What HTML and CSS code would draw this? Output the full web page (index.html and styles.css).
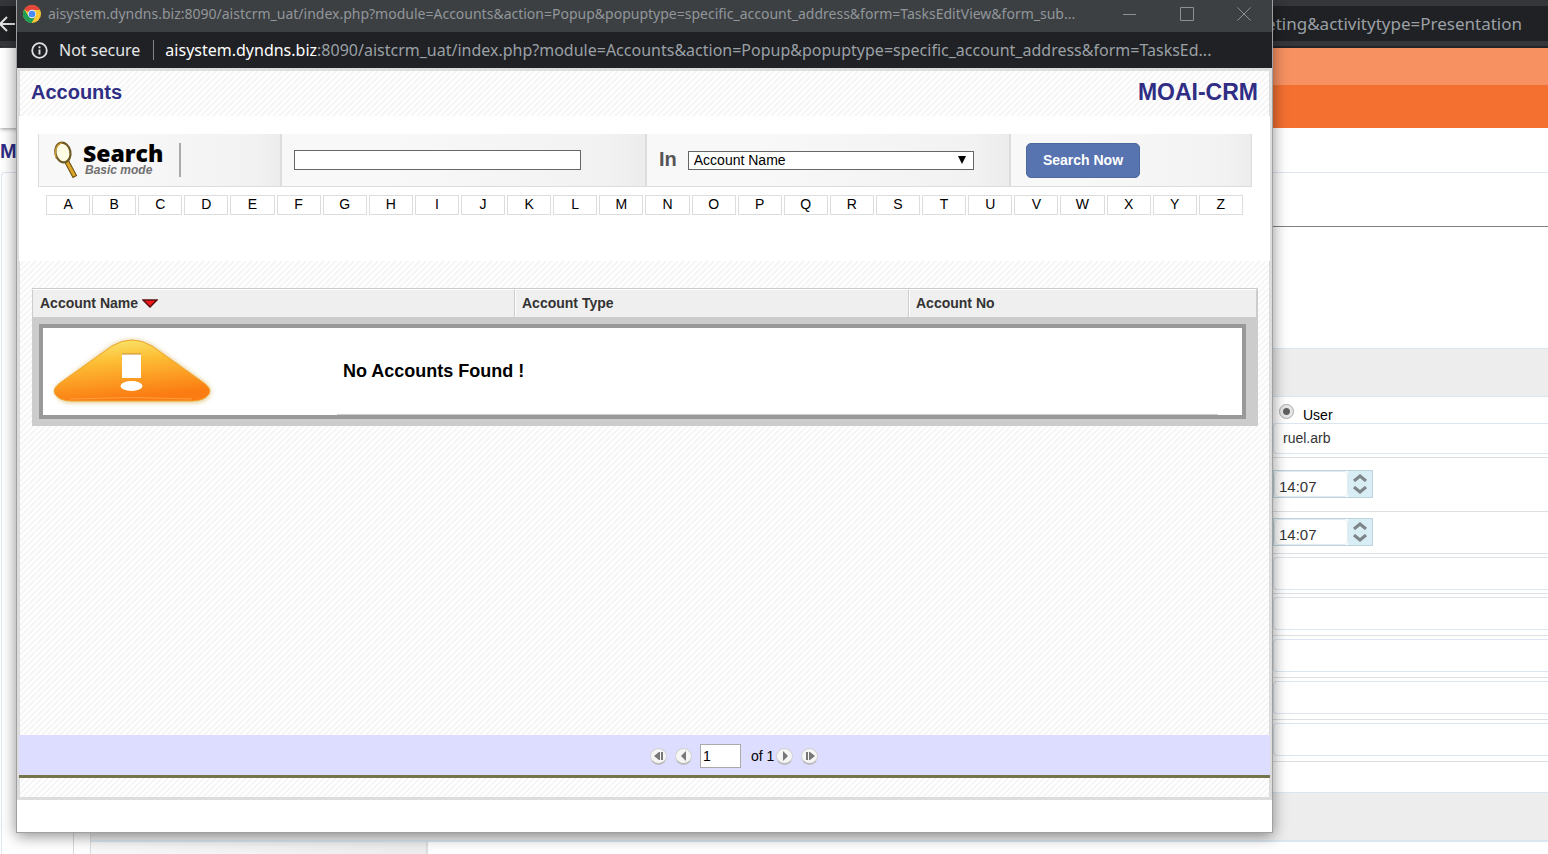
FILE: index.html
```html
<!DOCTYPE html>
<html lang="en">
<head>
<meta charset="utf-8">
<title>Accounts</title>
<link rel="stylesheet" href="styles.css">
</head>
<body>
<div class="desktop">
  <div class="browser-bar">
    <svg class="back" width="16" height="18" viewBox="0 0 16 18"><path d="M16 9H1M8 2L1 9l7 7" fill="none" stroke="#e2e3e4" stroke-width="2"/></svg>
    <div class="browser-url">eting&amp;activitytype=Presentation</div>
  </div>
  <header class="site-head">
    <div class="site-logo"></div>
    <div class="site-nav"><div class="nav-top"></div><div class="nav-main"></div></div>
  </header>
  <main class="site-body">
    <div class="side">
      <h2 class="side-title">Ma</h2>
      <div class="side-box"></div>
    </div>
    <div class="under">
      <div class="under-fill"></div>
      <div class="under-foot"><div class="under-label"></div></div>
    </div>
    <form class="details">
      <div class="gap-a"></div>
      <div class="gap-b"></div>
      <div class="gap-c"></div>
      <div class="band"></div>
      <div class="assign">
        <label class="radio-label"><input type="radio" class="radio" name="assign" checked><span>User</span></label>
        <input class="field owner" type="text" value="ruel.arb" aria-label="Assigned user">
      </div>
      <div class="time-row">
        <div class="time"><input type="text" value="14:07" aria-label="Start time">
          <div class="steps"><button type="button" aria-label="Later"><svg width="14" height="8" viewBox="0 0 14 8"><path d="M1 7l6-5 6 5" fill="none" stroke="#7d8588" stroke-width="3"/></svg></button><button type="button" aria-label="Earlier"><svg width="14" height="8" viewBox="0 0 14 8"><path d="M1 1l6 5 6-5" fill="none" stroke="#7d8588" stroke-width="3"/></svg></button></div></div>
      </div>
      <div class="time-row second">
        <div class="time"><input type="text" value="14:07" aria-label="End time">
          <div class="steps"><button type="button" aria-label="Later"><svg width="14" height="8" viewBox="0 0 14 8"><path d="M1 7l6-5 6 5" fill="none" stroke="#7d8588" stroke-width="3"/></svg></button><button type="button" aria-label="Earlier"><svg width="14" height="8" viewBox="0 0 14 8"><path d="M1 1l6 5 6-5" fill="none" stroke="#7d8588" stroke-width="3"/></svg></button></div></div>
      </div>
      <div class="line-row tight"><input class="field" type="text" aria-label="Field 1"></div>
      <div class="line-row"><input class="field" type="text" aria-label="Field 2"></div>
      <div class="line-row"><input class="field" type="text" aria-label="Field 3"></div>
      <div class="line-row"><input class="field" type="text" aria-label="Field 4"></div>
      <div class="line-row"><input class="field" type="text" aria-label="Field 5"></div>
      <div class="blank-row"></div>
      <div class="band last"></div>
    </form>
  </main>
</div>

<section class="popup">
  <div class="title-bar">
    <svg class="chrome" width="18" height="18" viewBox="0 0 18 18">
      <circle cx="9" cy="9" r="9" fill="#fbc834"/>
      <path d="M9 9L1.2 4.5A9 9 0 0 1 16.8 4.5L17 5H9z" fill="#e5483a"/>
      <path d="M1.2 4.5A9 9 0 0 0 8.6 18L12.5 11L9 9L5.5 11z" fill="#1f9d55"/>
      <circle cx="9" cy="9" r="4.2" fill="#f1f3f4"/><circle cx="9" cy="9" r="3.3" fill="#4a8af4"/>
    </svg>
    <div class="title-text">aisystem.dyndns.biz:8090/aistcrm_uat/index.php?module=Accounts&amp;action=Popup&amp;popuptype=specific_account_address&amp;form=TasksEditView&amp;form_sub...</div>
    <div class="win-buttons">
      <button type="button" aria-label="Minimize"><svg width="14" height="14" viewBox="0 0 14 14"><path d="M0 7.500H13" stroke="#8d9092"/></svg></button>
      <button type="button" aria-label="Maximize"><svg width="14" height="14" viewBox="0 0 14 14"><path d="M.5 .5h13v13H.5z" fill="none" stroke="#8d9092"/></svg></button>
      <button type="button" aria-label="Close"><svg width="14" height="14" viewBox="0 0 14 14"><path d="M.5 .5l13 13M13.500 .5l-13 13" stroke="#8d9092"/></svg></button>
    </div>
  </div>
  <div class="url-bar">
    <svg width="17" height="17" viewBox="0 0 17 17"><circle cx="8.500" cy="8.500" r="7.300" fill="none" stroke="#dfe1e3" stroke-width="1.800"/><path d="M8.500 7.400v5M8.500 4.200v2" stroke="#dfe1e3" stroke-width="1.900"/></svg>
    <span class="secure">Not secure</span>
    <span class="url"><b>aisystem.dyndns.biz</b>:8090/aistcrm_uat/index.php?module=Accounts&amp;action=Popup&amp;popuptype=specific_account_address&amp;form=TasksEd...</span>
  </div>
  <div class="page">
    <header class="page-head hatch"><h1>Accounts</h1><div class="brand">MOAI-CRM</div></header>
    <div class="search-zone">
      <form class="search">
        <div class="cell c-logo">
          <svg width="26" height="40" viewBox="0 0 26 40">
            <path d="M14 22L22 37" stroke="#6b4a0c" stroke-width="5"/><path d="M14 22L21.500 36" stroke="#d9a62a" stroke-width="3"/>
            <ellipse cx="10" cy="12.500" rx="7.500" ry="10" fill="#fffde4" stroke="#6d5722" stroke-width="2.200" transform="rotate(-12 10 13)"/>
            <path d="M3 18C1 10 4 4 9 3" fill="none" stroke="#c79a35" stroke-width="1.400"/>
          </svg>
          <div class="logo-text"><strong>Search</strong><em>Basic mode</em></div>
        </div>
        <div class="cell c-text"><input class="query" type="text" aria-label="Search text"></div>
        <div class="cell c-in"><label for="in">In</label>
          <div class="select-wrap"><select id="in"><option>Account Name</option></select><svg width="8" height="8" viewBox="0 0 8 8"><path d="M0 0h8L4 8z"/></svg></div></div>
        <div class="cell c-go"><button type="button" class="go">Search Now</button></div>
      </form>
      <nav class="letters"><a href="#">A</a><a href="#">B</a><a href="#">C</a><a href="#">D</a><a href="#">E</a><a href="#">F</a><a href="#">G</a><a href="#">H</a><a href="#">I</a><a href="#">J</a><a href="#">K</a><a href="#">L</a><a href="#">M</a><a href="#">N</a><a href="#">O</a><a href="#">P</a><a href="#">Q</a><a href="#">R</a><a href="#">S</a><a href="#">T</a><a href="#">U</a><a href="#">V</a><a href="#">W</a><a href="#">X</a><a href="#">Y</a><a href="#">Z</a></nav>
    </div>
    <div class="results hatch">
      <table>
        <thead><tr><th class="w-name">Account Name <svg width="16" height="9" viewBox="0 0 16 9"><path d="M1 1h14L8 8z" fill="#f01818" stroke="#5a1010" stroke-width="1.500"/></svg></th><th class="w-type">Account Type</th><th>Account No</th></tr></thead>
        <tbody><tr><td colspan="3">
          <div class="notice">
            <svg class="warn" width="176" height="80" viewBox="0 0 176 80">
              <defs><linearGradient id="g" x1="0" y1="0" x2=".25" y2="1"><stop offset="0" stop-color="#f7ee7a"/><stop offset=".4" stop-color="#fdbf35"/><stop offset="1" stop-color="#fb7c12"/></linearGradient>
              <filter id="f" x="-10%" y="-10%" width="120%" height="130%"><feGaussianBlur stdDeviation="2"/></filter></defs>
              <path d="M8 60Q4 54 12 48L62 11Q84-2 106 11L158 48Q165 54 162 60Q158 68 146 68H24Q12 68 8 60z" fill="#e4cf96" filter="url(#f)"/>
              <path d="M7 59Q4 54 12 48L64 11Q84-1 104 11L156 48Q164 54 161 59Q156 66 144 66H24Q11 66 7 59z" fill="url(#g)" stroke="#f0a32c"/>
              <path d="M22 64Q84 61 144 64" fill="none" stroke="#ffa040"/>
              <path d="M74 19H93V43H74z" fill="#fff"/><path d="M74 19H93" stroke="#c98a2a"/><ellipse cx="83.500" cy="51" rx="11" ry="5" fill="#fff"/>
            </svg>
            <div class="message">No Accounts Found !</div>
          </div>
        </td></tr></tbody>
      </table>
    </div>
    <div class="pager">
      <button type="button" class="pg" aria-label="First"><svg width="10" height="10" viewBox="0 0 10 10"><path d="M5 1v8L0 5zM5 1h1v8H5zM7 1h2v8H7z" fill="#777"/></svg></button>
      <button type="button" class="pg" aria-label="Previous"><svg width="10" height="10" viewBox="0 0 10 10"><path d="M7 0v10L2 5z" fill="#777"/></svg></button>
      <input class="page-no" type="text" value="1" aria-label="Page">
      <span class="total">of 1</span>
      <button type="button" class="pg" aria-label="Next"><svg width="10" height="10" viewBox="0 0 10 10"><path d="M3 0v10l5-5z" fill="#777"/></svg></button>
      <button type="button" class="pg" aria-label="Last"><svg width="10" height="10" viewBox="0 0 10 10"><path d="M5 1v8L10 5zM4 1h1v8H4zM1 1h2v8H1z" fill="#777"/></svg></button>
    </div>
    <div class="page-foot hatch"></div>
  </div>
  <div class="popup-rest"></div>
</section>
</body>
</html>
```
FILE: styles.css
```css
* { box-sizing: border-box; }
html, body { height: 100%; margin: 0; overflow: hidden; }
body { font-family: "Liberation Sans", Arial, sans-serif; font-size: 14px; color: #000; background: #fff; position: relative; }
button { padding: 0; border: 0; background: none; font: inherit; }
svg { display: block; }
input, select { font-family: inherit; }

/* Window behind */
.desktop { display: flex; flex-direction: column; height: 100%; }
.browser-bar { display: flex; justify-content: space-between; align-items: center; height: 48px; flex: none; padding-right: 26px; background: linear-gradient(#35363a 0 6px, #202124 6px 41px, #35363a 41px 46px, #222326 46px); }
.back { margin-left: -1px; }
.browser-url { font: 17px/24px "Noto Sans", sans-serif; color: #9aa0a6; }
.site-head { display: flex; height: 80px; flex: none; }
.site-logo { width: 90px; background: #fff; box-shadow: 0 1px 4px #999; }
.site-nav { flex: 1; display: flex; flex-direction: column; }
.nav-top { height: 37px; background: #f79162; }
.nav-main { flex: 1; background: #f37030; }
.site-body { display: flex; flex: 1; min-height: 0; }
.side { width: 90px; display: flex; flex-direction: column; }
.side-title { margin: 10px 0 8px; font-size: 20px; line-height: 26px; color: #302d85; }
.side-box { flex: 1; margin: 0 16px 0 1px; border: 1px solid #dfe6f2; border-right-color: #d8d8d8; border-bottom: 0; border-radius: 4px 4px 0 0; }
.under { flex: 1; display: flex; flex-direction: column; border-left: 1px solid #d8dde4; }
.under-fill { flex: 1; background: #ededed; }
.under-foot { height: 14px; border-top: 2px solid #dbe6f0; }
.under-label { width: 337px; height: 12px; border-right: 2px solid #dcdfe2; background: linear-gradient(90deg, #f8f8f8, #ededed); }
.details { width: 275px; display: flex; flex-direction: column; }
.details > div { flex: none; }
.gap-a { height: 45px; border-bottom: 1px solid #dfe6f2; }
.gap-b { height: 54px; border-bottom: 1px solid #808080; }
.gap-c { height: 121px; }
.band { height: 49px; background: #ededed; border: solid #dbe6f3; border-width: 1px 0; }
.band.last { height: 50px; border-bottom-width: 2px; }
.assign { height: 61px; padding-top: 7px; border-bottom: 1px solid #dcdfe3; }
.radio-label { display: flex; gap: 9px; height: 19px; padding-left: 6px; line-height: 22px; }
.radio { appearance: none; width: 15px; height: 15px; margin: 0; border: 1px solid #a8a8a8; border-radius: 50%; background: radial-gradient(#606060 0 3px, #e6e6e6 4px); }
.field { display: block; width: 100%; height: 33px; padding: 0 9px; border: 1px solid #dbe6f2; border-right: 0; border-radius: 4px 0 0 4px; background: #fff; font-size: 14px; color: #333; }
.owner { height: 31px; padding-bottom: 2px; }
.time-row { height: 54px; padding-top: 12px; border-bottom: 1px solid #dcdfe3; }
.time-row.second { height: 42px; padding-top: 6px; }
.time { display: flex; width: 100px; height: 28px; border: 1px solid #bcd5e0; }
.time input { width: 74px; padding: 4px 4px 0; border: 1px solid #e3ebf2; border-radius: 4px; font-size: 15px; color: #333; }
.steps { flex: 1; display: flex; flex-direction: column; align-items: center; justify-content: space-around; padding: 1px 0; background: #d9edf4; }
.line-row { height: 42px; padding-top: 3px; border-bottom: 1px solid #dcdfe3; }
.line-row.tight { height: 40px; }
.blank-row { height: 30px; }

/* Popup window */
.popup { position: absolute; top: 0; bottom: 21px; left: 16px; right: 275px; display: flex; flex-direction: column; border: 1px solid #a0a0a0; border-top: 0; background: #fff; box-shadow: 0 3px 14px rgba(0, 0, 0, .45); }
.title-bar { display: flex; align-items: center; height: 32px; flex: none; padding: 0 21px 4px 6px; background: #3c4043; color: #92969a; }
.title-text { flex: 1; min-width: 0; margin-left: 7px; overflow: hidden; white-space: nowrap; font: 14px/22px "Noto Sans", sans-serif; }
.win-buttons { display: flex; gap: 43px; }
.url-bar { display: flex; align-items: center; height: 36px; flex: none; padding: 0 12px 0 14px; background: #202124; color: #9aa0a6; white-space: nowrap; font: 16px/24px "Noto Sans", sans-serif; }
.secure { margin: 0 11px; padding-right: 13px; color: #e4e6e8; border-right: 1px solid #80868b; line-height: 20px; }
.url { flex: 1; min-width: 0; overflow: hidden; }
.url b { font-weight: 400; color: #fff; }
.page { flex: 1; display: flex; flex-direction: column; border: solid #ddd; border-width: 3px 2px; }
.hatch { border: solid #ddd; border-width: 0 1px; background: linear-gradient(135deg, #fff 25%, #f6f6f6 25% 50%, #fff 50% 75%, #f6f6f6 75%) 0 0 / 6px 6px; }
.page-head { display: flex; justify-content: space-between; height: 45px; flex: none; padding: 7px 11px; color: #302d85; font-weight: 700; line-height: 28px; }
.page-head h1 { margin: 0; font-size: 20px; }
.brand { font-size: 23px; }
.search-zone { height: 145px; flex: none; padding: 18px 18px 0 19px; }
.search { display: grid; grid-template-columns: 243fr 365fr 364fr 240fr; height: 53px; border: solid #ddd; border-width: 0 1px 1px; }
.cell { display: flex; align-items: center; min-width: 0; border-right: 2px solid #ddd; background: linear-gradient(90deg, #f8f8f8 30%, #f2f2f2 90%, #ececec); }
.c-logo { padding-left: 14px; }
.c-text { padding-left: 12px; }
.c-in { padding-left: 12px; }
.c-go { padding-left: 15px; border: 0; }
.logo-text { display: flex; flex-direction: column; height: 34px; margin-left: 4px; padding-right: 16px; border-right: 2px solid #aaa; }
.logo-text strong { font: 800 23px/20px "Open Sans", sans-serif; }
.logo-text em { margin-left: 2px; font-size: 12px; line-height: 14px; font-weight: 700; color: #707070; }
.query { width: 287px; height: 20px; border: 1px solid #666; background: #fff; }
.c-in label { margin-right: 11px; font-size: 20px; font-weight: 700; color: #555; line-height: 26px; height: 28px; }
.select-wrap { display: grid; width: 286px; align-items: center; }
.select-wrap > * { grid-area: 1 / 1; }
.select-wrap svg { justify-self: end; margin-right: 8px; pointer-events: none; z-index: 1; }
select { appearance: none; width: 100%; height: 19px; padding: 0 5px; border: 1px solid #666; border-radius: 0; background: #fff; font-size: 14px; line-height: 17px; color: #000; }
.go { width: 114px; height: 35px; border: 1px solid #4b689f; border-radius: 5px; background: #5774b0; color: #fff; font-size: 14px; font-weight: 700; }
.letters { display: flex; gap: 2px; padding: 8px 9px 0 8px; }
.letters a { flex: 1; height: 20px; border: 1px solid #ddd; color: #000; text-align: center; text-decoration: none; line-height: 17px; }
.results { flex: 1; padding: 27px 11px 0 12px; }
table { width: 100%; table-layout: fixed; border-collapse: separate; border-spacing: 0; background: #ccc; border: solid #ccc; border-width: 1px 1px 0 0; }
th { height: 28px; padding: 0 6px; border: solid #fff; border-width: 1px 0 0 1px; border-right: 1px solid #ccc; background: #efefef; color: #333; text-align: left; font-size: 14px; line-height: 27px; }
th:first-child { border-left: 1px solid #ccc; padding-left: 7px; }
th svg { display: inline-block; }
.w-name { width: 483px; }
.w-type { width: 394px; }
td { padding: 7px 11px 7px 7px; }
.notice { display: flex; height: 95px; border: 4px solid #999; background: #fff; }
.warn { margin: 7px 0 0 5px; }
.message { flex: 1; margin: 0 24px 0 113px; padding-left: 6px; border-bottom: 1px solid #ccc; font-size: 18px; font-weight: 700; line-height: 86px; }
.pager { display: flex; align-items: center; height: 43px; flex: none; padding: 2px 0 0 631px; background: #ddf; border-bottom: 3px solid #75754d; }
.pg { display: grid; place-items: center; width: 17px; height: 17px; margin-right: 8px; border: 1px solid #d0d0d4; border-bottom: 2px solid #bbb; border-radius: 50%; background: #f5f5f5; }
.page-no { width: 41px; height: 24px; padding: 0 2px; border: 1px solid #aaa; font-size: 14px; }
.total { margin: 0 2px 0 10px; line-height: 20px; }
.page-foot { height: 19px; flex: none; }
.popup-rest { height: 32px; flex: none; }
```
